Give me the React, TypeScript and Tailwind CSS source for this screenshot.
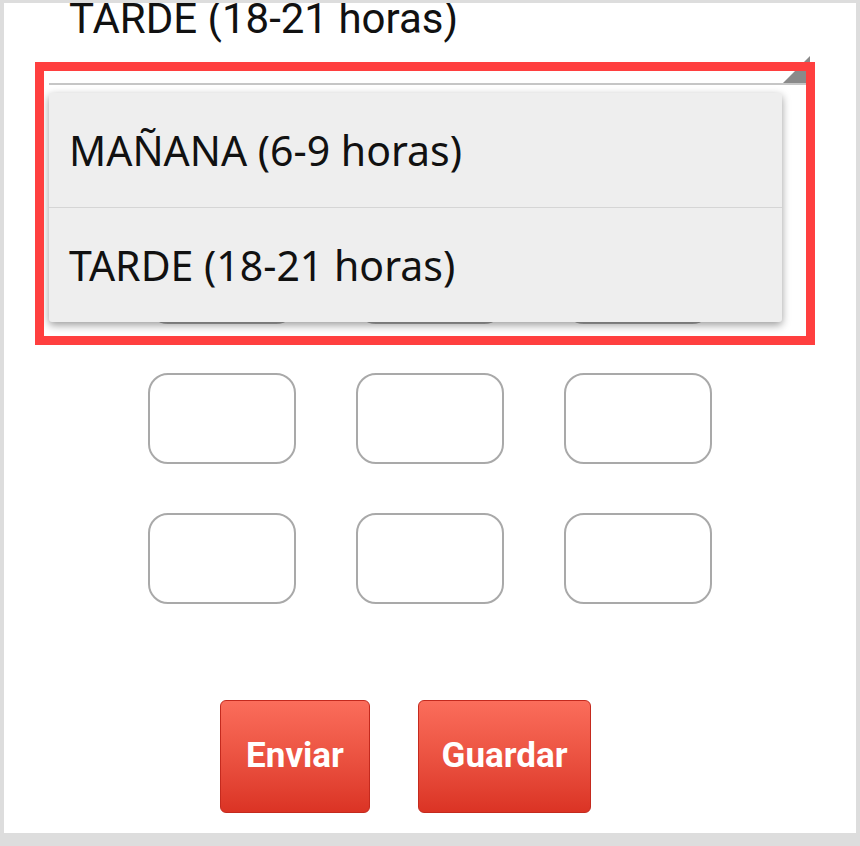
import React from 'react'

const noto = { fontFamily: '"Noto Sans", "DejaVu Sans", sans-serif' }
const roboto = { fontFamily: 'Roboto, "Liberation Sans", sans-serif' }

const options = ['MAÑANA (6-9 horas)', 'TARDE (18-21 horas)']

function Box() {
  return <div className="h-[91px] rounded-[20px] border-2 border-[#a9a9a9] bg-white" />
}

function RedButton({ label, width }: { label: string; width: string }) {
  return (
    <button
      className={`${width} h-[113px] rounded-[6px] border border-[#c42a1e] bg-gradient-to-b from-[#fb6d5b] to-[#db3324] text-white text-[35px] font-bold flex items-center justify-center`}
      style={roboto}
    >
      {label}
    </button>
  )
}

export default function App() {
  return (
    <div className="min-h-screen bg-[#dddddd] pt-[3px] px-[4px]">
      <div className="relative w-[852px] h-[830px] bg-white overflow-hidden">
        {/* selected value */}
        <div className="ml-[65px] h-[31px] text-[42px] leading-[31px] text-[#111]" style={roboto}>
          TARDE (18-21 horas)
        </div>

        {/* spinner underline + corner triangle */}
        <div className="ml-[45px] w-[761px] h-[51px] border-b-2 border-[#c6c6c6] flex justify-end items-end">
          <svg width="27" height="27" viewBox="0 0 27 27" className="block">
            <polygon points="0,27 27,27 27,0" fill="#8a8a8a" />
          </svg>
        </div>

        {/* grid of boxes */}
        <div className="mt-[148px] grid grid-cols-[148px_148px_148px] justify-center gap-x-[60px] gap-y-[49px]">
          {Array.from({ length: 9 }).map((_, i) => (
            <Box key={i} />
          ))}
        </div>

        {/* actions */}
        <div className="mt-[96px] ml-[216px] flex gap-[48px]">
          <RedButton label="Enviar" width="w-[150px]" />
          <RedButton label="Guardar" width="w-[173px]" />
        </div>

        {/* open dropdown */}
        <div className="absolute left-[45px] top-[90px] w-[733px] h-[229px] bg-[#eeeeee] rounded-[3px] shadow-[0_3px_8px_rgba(0,0,0,0.4)] flex flex-col">
          {options.map((o, i) => (
            <div
              key={o}
              className={`flex-1 flex items-center pl-[20px] text-[41px] leading-none text-[#111] ${i > 0 ? 'border-t border-[#d5d5d5]' : ''}`}
              style={noto}
            >
              {o}
            </div>
          ))}
        </div>

        {/* annotation frame */}
        <div className="absolute left-[31px] top-[59px] w-[780px] h-[283px] border-[9px] border-[#ff3f3f] pointer-events-none" />
      </div>
    </div>
  )
}
